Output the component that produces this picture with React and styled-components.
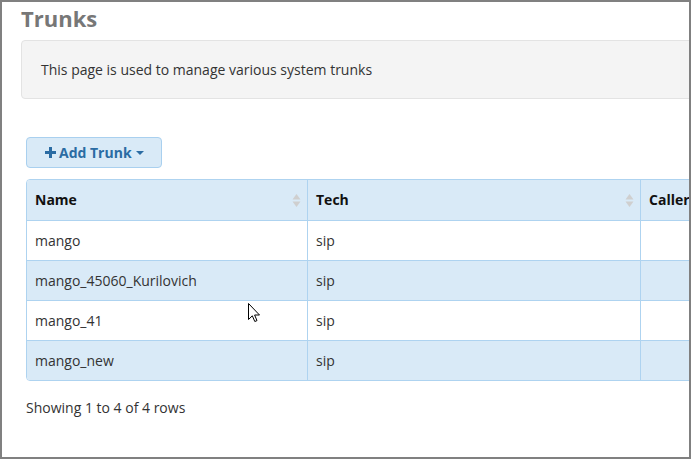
import React from "react";
import styled, { createGlobalStyle } from "styled-components";

const Global = createGlobalStyle`
  html, body { margin: 0; padding: 0; background: #fff; }
  body { font-family: "Open Sans", "Liberation Sans", sans-serif; font-size: 14px; line-height: 20px; color: #333; }
`;

const Frame = styled.div`
  position: relative;
  width: 691px;
  height: 459px;
  box-sizing: border-box;
  border: 2px solid #808080;
  overflow: hidden;
`;

const Page = styled.div`
  width: 1000px;
  padding: 3px 0 0 19px;
`;

const Title = styled.h1`
  margin: 0 0 9px;
  font-size: 22px;
  line-height: 26px;
  font-weight: 700;
  color: #777;
`;

const Well = styled.div`
  background: #f4f4f4;
  border: 1px solid #e3e3e3;
  border-radius: 4px;
  padding: 19px 19px 18px;
`;

const Toolbar = styled.div`
  margin: 38px 0 11px 5px;
  display: flex;
`;

const Button = styled.button`
  display: inline-flex;
  align-items: center;
  gap: 3px;
  height: 31px;
  padding: 0 17px 0 18px;
  box-sizing: border-box;
  background: #d9eaf7;
  border: 1px solid #a9d0ef;
  border-radius: 4px;
  color: #2b6ca3;
  font-family: inherit;
  font-size: 14px;
  font-weight: 700;
  line-height: 20px;
  cursor: pointer;
`;

const Caret = styled.span`
  display: inline-block;
  width: 0;
  height: 0;
  margin-left: 1px;
  border-top: 4px solid #2b6ca3;
  border-left: 4px solid transparent;
  border-right: 4px solid transparent;
`;

const Table = styled.div`
  margin-left: 5px;
  border: 1px solid #aed3f0;
  border-radius: 4px;
  overflow: hidden;
  width: 900px;
`;

const Row = styled.div`
  display: grid;
  grid-template-columns: 280px 333px 1fr;
  background: ${(p) => (p.$shaded ? "#d9eaf7" : "#fff")};
  border-top: ${(p) => (p.$first ? "none" : "1px solid #aed3f0")};
`;

const Cell = styled.div`
  height: ${(p) => (p.$head ? "40px" : "39px")};
  display: flex;
  align-items: center;
  justify-content: space-between;
  padding: 0 6px 0 8px;
  box-sizing: border-box;
  border-left: ${(p) => (p.$firstCol ? "none" : "1px solid #aed3f0")};
  font-weight: ${(p) => (p.$head ? 700 : 400)};
  color: ${(p) => (p.$head ? "#111" : "#333")};
  white-space: nowrap;
`;

const Footer = styled.div`
  margin: 17px 0 0 5px;
`;

const Cursor = styled.svg`
  position: absolute;
  left: 246px;
  top: 301px;
`;

const SortIcon = () => (
  <svg width="9" height="15" viewBox="0 0 9 15">
    <path d="M4.5 1 L8.5 6.5 L0.5 6.5 Z" fill="#cfcfcf" />
    <path d="M4.5 14 L8.5 8.5 L0.5 8.5 Z" fill="#cfcfcf" />
  </svg>
);

const Plus = () => (
  <svg width="11" height="11" viewBox="0 0 11 11">
    <path d="M4 0h3v4h4v3H7v4H4V7H0V4h4z" fill="#2b6ca3" />
  </svg>
);

const rows = ["mango", "mango_45060_Kurilovich", "mango_41", "mango_new"];

export default function App() {
  return (
    <>
      <Global />
      <Frame>
        <Page>
          <Title>Trunks</Title>
          <Well>This page is used to manage various system trunks</Well>
          <Toolbar>
            <Button>
              <Plus />
              Add Trunk
              <Caret />
            </Button>
          </Toolbar>
          <Table>
            <Row $shaded $first>
              <Cell $head $firstCol>
                Name
                <SortIcon />
              </Cell>
              <Cell $head>
                Tech
                <SortIcon />
              </Cell>
              <Cell $head>Caller ID</Cell>
            </Row>
            {rows.map((name, i) => (
              <Row key={name} $shaded={i % 2 === 1}>
                <Cell $firstCol>{name}</Cell>
                <Cell>sip</Cell>
                <Cell></Cell>
              </Row>
            ))}
          </Table>
          <Footer>Showing 1 to 4 of 4 rows</Footer>
        </Page>
        <Cursor width="13" height="21" viewBox="0 0 13 21">
          <path
            d="M0.5 0.5 L0.5 16.5 L4.3 12.8 L6.8 18.5 L9 17.6 L6.6 12 L11.5 12 Z"
            fill="#fff"
            stroke="#000"
            strokeWidth="1"
            strokeLinejoin="miter"
          />
        </Cursor>
      </Frame>
    </>
  );
}
